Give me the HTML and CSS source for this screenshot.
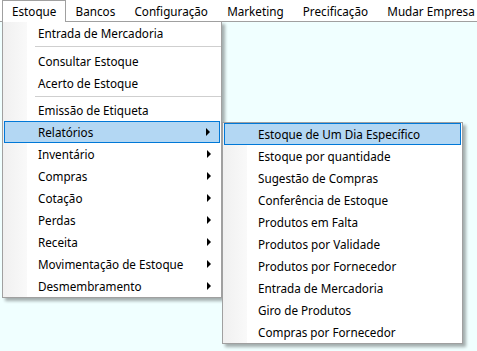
FILE: index.html
```html
<!DOCTYPE html>
<html lang="pt-BR">
  <head>
    <meta charset="UTF-8" />
    <title>Estoque</title>
    <link rel="stylesheet" href="styles.css">
  </head>
  <body>
    <div class="menubar">
      <div class="menubar-item open">Estoque</div>
      <div class="menubar-item">Bancos</div>
      <div class="menubar-item">Configuração</div>
      <div class="menubar-item">Marketing</div>
      <div class="menubar-item">Precificação</div>
      <div class="menubar-item">Mudar Empresa</div>
    </div>

    <!-- Estoque dropdown -->
    <div class="dropdown main-menu">
      <div class="menu-item">Entrada de Mercadoria</div>
      <div class="separator sep-first"></div>
      <div class="menu-item">Consultar Estoque</div>
      <div class="menu-item">Acerto de Estoque</div>
      <div class="separator"></div>
      <div class="menu-item">Emissão de Etiqueta</div>
      <div class="menu-item has-sub selected">Relatórios<span class="arrow"></span></div>
      <div class="menu-item has-sub">Inventário<span class="arrow"></span></div>
      <div class="menu-item has-sub">Compras<span class="arrow"></span></div>
      <div class="menu-item has-sub">Cotação<span class="arrow"></span></div>
      <div class="menu-item has-sub">Perdas<span class="arrow"></span></div>
      <div class="menu-item has-sub">Receita<span class="arrow"></span></div>
      <div class="menu-item has-sub">Movimentação de Estoque<span class="arrow"></span></div>
      <div class="menu-item has-sub">Desmembramento<span class="arrow"></span></div>
    </div>

    <!-- Relatórios submenu -->
    <div class="dropdown sub-menu">
      <div class="menu-item selected">Estoque de Um Dia Específico</div>
      <div class="menu-item">Estoque por quantidade</div>
      <div class="menu-item">Sugestão de Compras</div>
      <div class="menu-item">Conferência de Estoque</div>
      <div class="menu-item">Produtos em Falta</div>
      <div class="menu-item">Produtos por Validade</div>
      <div class="menu-item">Produtos por Fornecedor</div>
      <div class="menu-item">Entrada de Mercadoria</div>
      <div class="menu-item">Giro de Produtos</div>
      <div class="menu-item">Compras por Fornecedor</div>
    </div>
  </body>
</html>
```
FILE: styles.css
```css
body {
  margin: 0;
  background-color: #f0ffff;
  color: #000000;
  font-family: 'Noto Sans', 'Open Sans', sans-serif;
  font-size: 11.7px;
  height: 351px;
  overflow: hidden;
}
.menubar {
  display: flex;
  height: 21px;
  padding-left: 2px;
  background-color: #ffffff;
  border-bottom: 1px solid #a0a0a0;
  white-space: nowrap;
}
.menubar-item {
  line-height: 20px;
  padding: 0 8.6px;
  border: 1px solid transparent;
  border-bottom: none;
}
.menubar-item.open {
  position: relative;
  z-index: 3;
  height: 21px;
  padding-left: 9px;
  border-color: #a0a0a0;
  background-color: #ffffff;
}
.dropdown {
  position: absolute;
  box-sizing: border-box;
  border: 1px solid #a0a0a0;
  background: linear-gradient(90deg, #f0f0f0, #f9f9f9) no-repeat 0 0 / 24px 100%, #ffffff;
  box-shadow: 3px 3px 3px rgba(0, 0, 0, 0.32);
  white-space: nowrap;
}
.main-menu {
  left: 2px;
  top: 21px;
  width: 220px;
  z-index: 1;
}
.sub-menu {
  left: 222px;
  top: 122px;
  width: 241px;
  z-index: 2;
}
.menu-item {
  position: relative;
  height: 22px;
  line-height: 23px;
  padding-left: 35px;
}
.menu-item.selected {
  margin: 0 1px;
  padding-left: 33px;
  height: 20px;
  line-height: 21px;
  border: 1px solid #0078d7;
  background-color: #b3d7f3;
}
.arrow {
  position: absolute;
  right: 10px;
  top: 7px;
  border-left: 4px solid #000000;
  border-top: 4px solid transparent;
  border-bottom: 4px solid transparent;
}
.menu-item.selected .arrow {
  right: 9px;
  top: 6px;
}
.separator {
  height: 5px;
  position: relative;
}
.separator.sep-first {
  height: 6px;
}
.separator::after {
  content: '';
  position: absolute;
  left: 32px;
  right: 0;
  top: 2px;
  border-top: 1px solid #cfcfcf;
}
```
